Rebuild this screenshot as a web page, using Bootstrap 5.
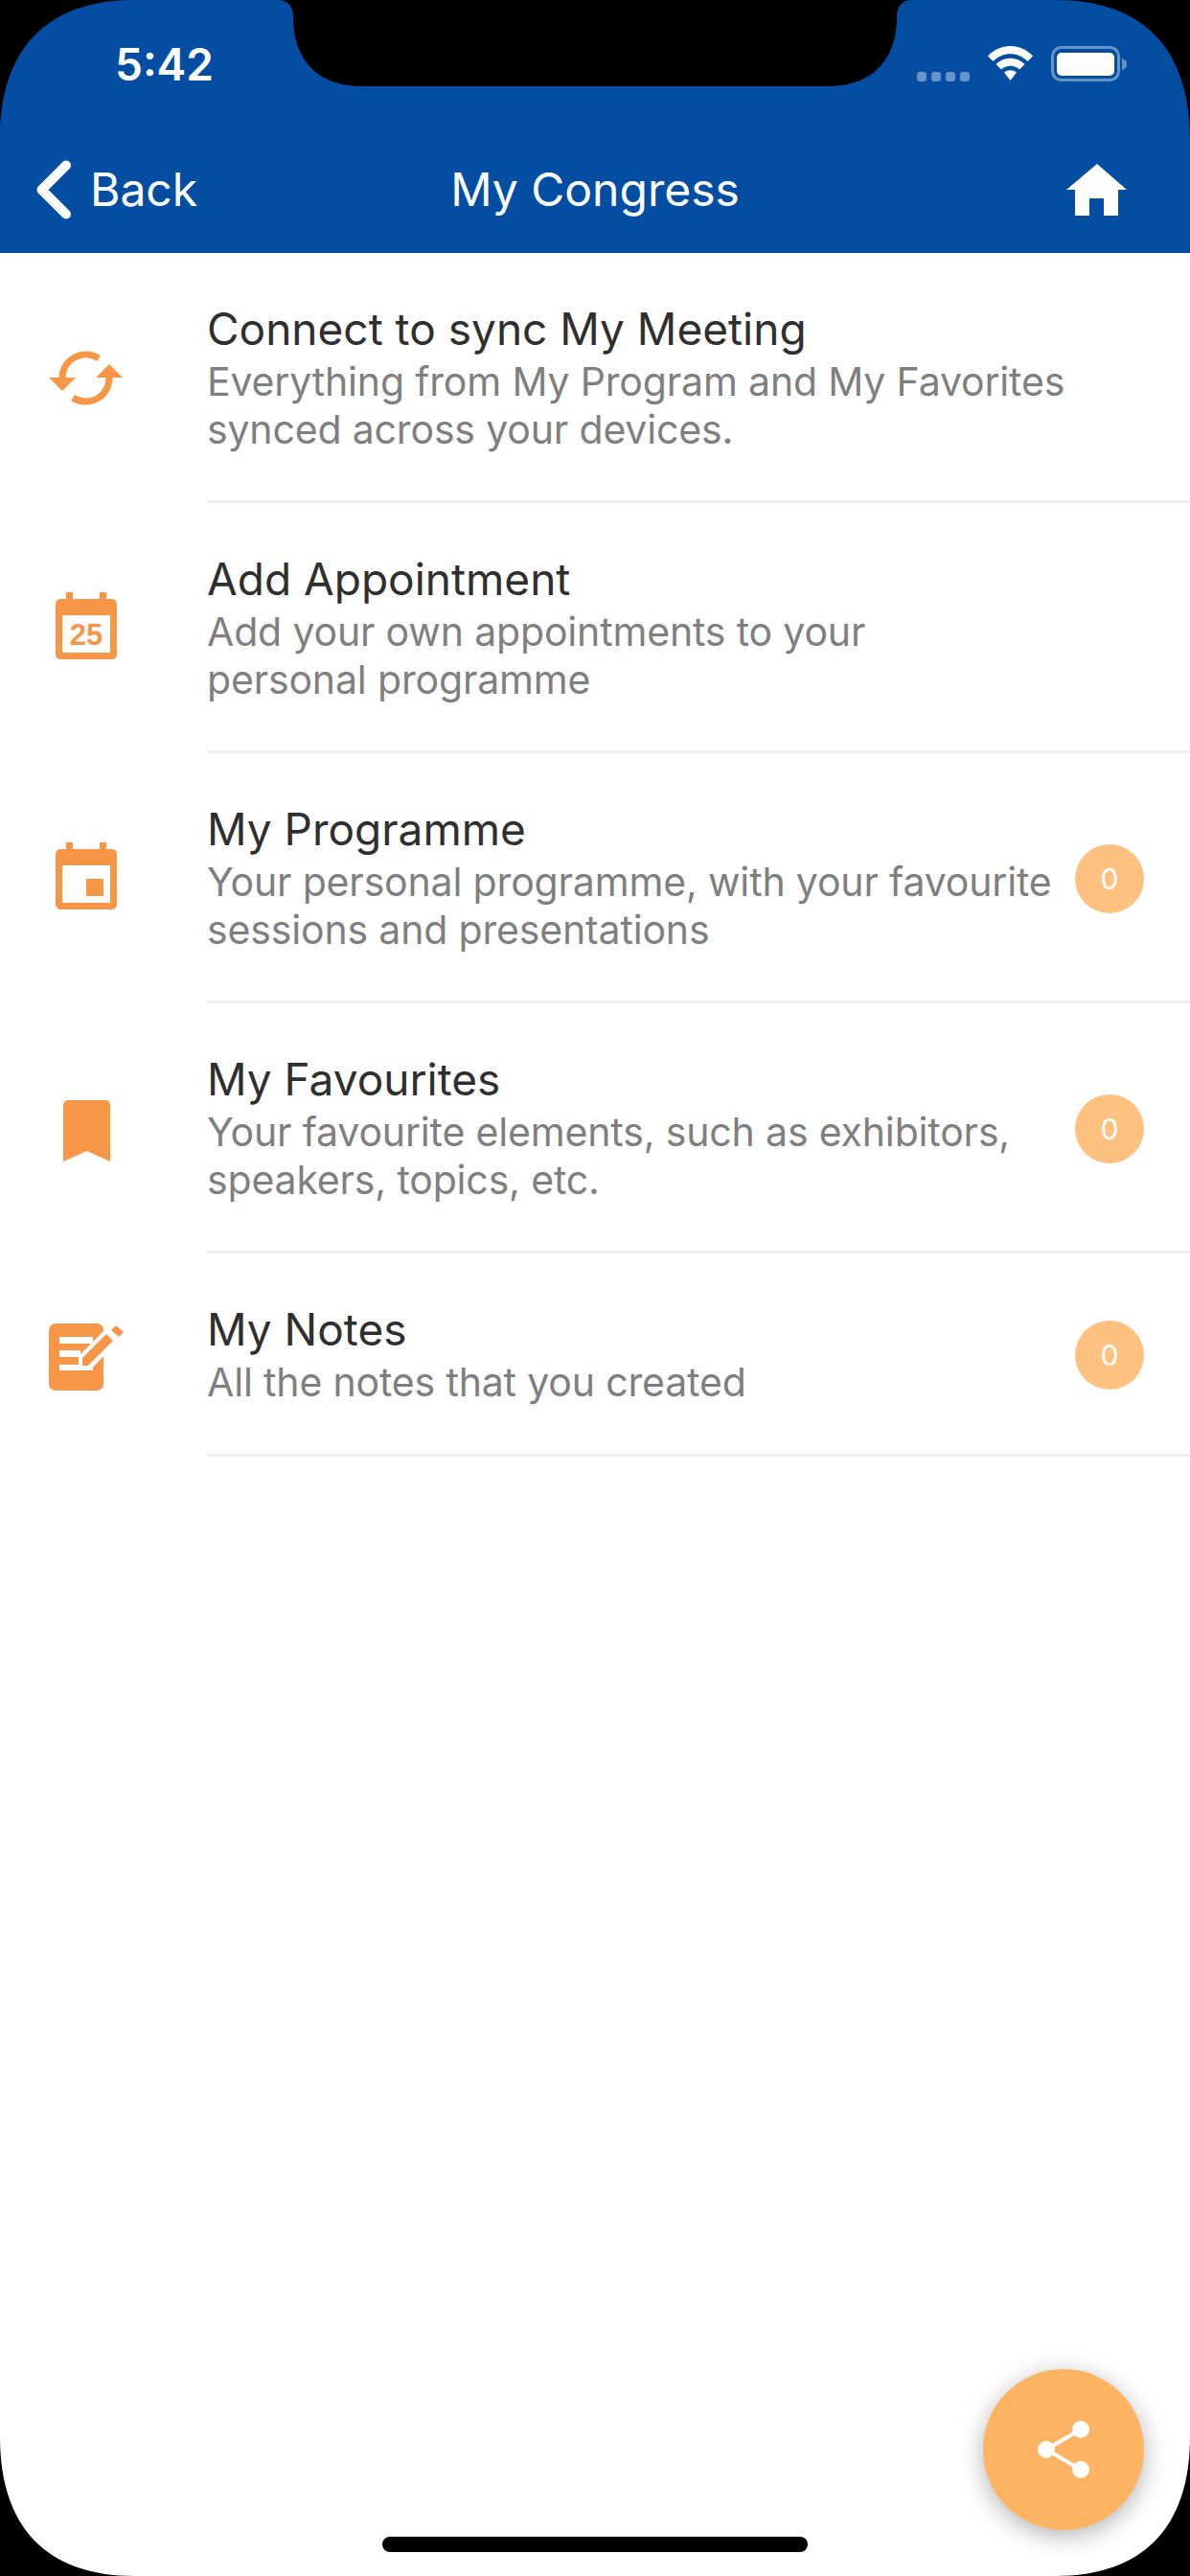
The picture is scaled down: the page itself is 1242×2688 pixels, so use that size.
<!DOCTYPE html>
<html lang="en">
<head>
  <meta charset="UTF-8">
  <title>My Congress</title>
  <meta name="viewport" content="width=device-width, initial-scale=1">
  <link href="https://cdn.jsdelivr.net/npm/bootstrap@5.3.3/dist/css/bootstrap.min.css" rel="stylesheet">
  <style>
    body { width: 1242px; height: 2688px; overflow: hidden; background: #fff; font-family: Inter, "Liberation Sans", sans-serif; }
    .phone-screen { width: 1242px; height: 2688px; }
    .app-header { height: 264px; background: #034ea2; color: #fff; }
    .status-row { height: 132px; padding: 42px 65px 0 120px; }
    .status-time { font-size: 46px; font-weight: 600; line-height: 50px; }
    .status-icons { margin-top: 6px; }
    .nav-row { height: 132px; padding: 0 66px 0 38px; }
    .nav-side { flex: 1 1 0; }
    .back-text { font-size: 48px; line-height: 60px; margin-left: 19px; }
    .nav-title { font-size: 48px; line-height: 60px; margin-left: 28px; }
    .entry-list { background: #fff; }
    .entry-icon { width: 216px; padding-right: 36px; flex: none; }
    .entry-icon svg { fill: #f79646; display: block; }
    .icon-up { margin-bottom: 6px; }
    .icon-down { margin-top: 4px; }
    .entry-body { border-bottom: 3px solid #efeff0; padding: 49px 48px 49px 0; }
    .entry-body-last { padding-bottom: 50px; }
    .entry-title { font-size: 46px; line-height: 60px; color: #2f2f2f; margin: 0; }
    .entry-desc { font-size: 41px; letter-spacing: -.16px; line-height: 50px; color: #7f7f7f; margin: 0; white-space: nowrap; }
    .count-dot { width: 72px; height: 72px; margin-top: 4px; background: #fec180; color: #fff; font-size: 30px; flex: none; }
    .share-fab { position: absolute; left: 1026px; top: 2472px; width: 168px; height: 168px; background: #fdb462; box-shadow: 0 6px 26px rgba(0, 0, 0, .3); }
    .home-bar { position: absolute; left: 399px; top: 2647px; width: 444px; height: 16px; background: #000; border-radius: 8px; }
    .device-mask { position: absolute; left: 0; top: 0; pointer-events: none; }
  </style>
</head>
<body class="position-relative">

<div class="phone-screen d-flex flex-column">

  <!-- Header -->
  <header class="app-header d-flex flex-column">
    <div class="status-row d-flex justify-content-between align-items-start">
      <span class="status-time">5:42</span>
      <svg class="status-icons" width="220" height="40" viewBox="0 0 220 40" fill="#fff">
        <g opacity=".4">
          <rect x="0" y="27" width="10" height="10" rx="3"/>
          <rect x="15" y="27" width="10" height="10" rx="3"/>
          <rect x="30" y="27" width="10" height="10" rx="3"/>
          <rect x="45" y="27" width="10" height="10" rx="3"/>
        </g>
        <path d="M74 10.500C87 -3.500 108 -3.500 121 10.500L115.500 16C105.500 5.500 89.500 5.500 79.500 16Z"/>
        <path d="M82.500 19C91 10.500 104 10.500 112.500 19L107 24.500C101.500 19.500 93.500 19.500 88 24.500Z"/>
        <path d="M91 27.500C95 24.500 100 24.500 104 27.500L97.500 36Z"/>
        <rect x="141.500" y="1.500" width="69" height="34" rx="9" fill="none" stroke="#fff" stroke-width="3" opacity=".4"/>
        <rect x="146" y="7" width="60" height="24" rx="5"/>
        <path d="M214 13C218 14.500 219 16 219 19C219 22 218 23.500 214 25Z" opacity=".4"/>
      </svg>
    </div>
    <nav class="nav-row d-flex align-items-center">
      <div class="nav-side d-flex align-items-center">
        <svg width="37" height="62" viewBox="0 0 37 62"><path d="M31 5.500L5.500 31L31 56.500" fill="none" stroke="#fff" stroke-width="10" stroke-linecap="round" stroke-linejoin="round"/></svg>
        <span class="back-text">Back</span>
      </div>
      <div class="nav-title">My Congress</div>
      <div class="nav-side d-flex justify-content-end">
        <svg width="63" height="54" viewBox="0 0 63 54" fill="#fff"><path d="M32 0L63 27H54V54H39V36H24V54H9V27H0Z"/></svg>
      </div>
    </nav>
  </header>

  <!-- Menu -->
  <ul class="entry-list list-group list-group-flush">
    <li class="list-group-item d-flex p-0 border-0">
      <div class="entry-icon d-flex align-items-center justify-content-center">
        <svg width="78" height="57" viewBox="0 0 78 57">
          <path d="M52 8A24.500 24.500 0 0 0 14 28" style="fill:none;stroke:#f79646;stroke-width:7"/>
          <path d="M25 49A24.500 24.500 0 0 0 63 28" style="fill:none;stroke:#f79646;stroke-width:7"/>
          <path d="M0 28H28L14 42Z"/>
          <path d="M49 28H77L63 14Z"/>
        </svg>
      </div>
      <div class="entry-body flex-grow-1">
        <p class="entry-title">Connect to sync My Meeting</p>
        <p class="entry-desc">Everything from My Program and My Favorites<br>synced across your devices.</p>
      </div>
    </li>
    <li class="list-group-item d-flex p-0 border-0">
      <div class="entry-icon d-flex align-items-center justify-content-center">
        <svg class="icon-up" width="64" height="70" viewBox="0 0 64 70">
          <path fill-rule="evenodd" d="M11 0H18V7H46V0H53V7H58C62 7 64 9 64 13V64C64 68 62 70 58 70H6C2 70 0 68 0 64V13C0 9 2 7 6 7H11ZM7 24V63H57V24Z"/>
          <text x="32" y="55" text-anchor="middle" font-family="Liberation Sans, sans-serif" font-weight="700" font-size="31">25</text>
        </svg>
      </div>
      <div class="entry-body flex-grow-1">
        <p class="entry-title">Add Appointment</p>
        <p class="entry-desc">Add your own appointments to your<br>personal programme</p>
      </div>
    </li>
    <li class="list-group-item d-flex p-0 border-0">
      <div class="entry-icon d-flex align-items-center justify-content-center">
        <svg class="icon-up" width="64" height="70" viewBox="0 0 64 70">
          <path fill-rule="evenodd" d="M11 0H18V7H46V0H53V7H58C62 7 64 9 64 13V64C64 68 62 70 58 70H6C2 70 0 68 0 64V13C0 9 2 7 6 7H11ZM7 24V63H57V24Z"/>
          <rect x="32" y="38" width="18" height="18"/>
        </svg>
      </div>
      <div class="entry-body flex-grow-1 d-flex align-items-center justify-content-between">
        <div>
          <p class="entry-title">My Programme</p>
          <p class="entry-desc">Your personal programme, with your favourite<br>sessions and presentations</p>
        </div>
        <span class="count-dot rounded-circle d-flex align-items-center justify-content-center">0</span>
      </div>
    </li>
    <li class="list-group-item d-flex p-0 border-0">
      <div class="entry-icon d-flex align-items-center justify-content-center">
        <svg class="icon-down" width="49" height="64" viewBox="0 0 49 64">
          <path d="M6 0H43C47 0 49 2 49 6V64L24.500 53L0 64V6C0 2 2 0 6 0Z"/>
        </svg>
      </div>
      <div class="entry-body flex-grow-1 d-flex align-items-center justify-content-between">
        <div>
          <p class="entry-title">My Favourites</p>
          <p class="entry-desc">Your favourite elements, such as exhibitors,<br>speakers, topics, etc.</p>
        </div>
        <span class="count-dot rounded-circle d-flex align-items-center justify-content-center">0</span>
      </div>
    </li>
    <li class="list-group-item d-flex p-0 border-0">
      <div class="entry-icon d-flex align-items-center justify-content-center">
        <svg class="icon-down" width="78" height="70" viewBox="0 0 78 70">
          <rect x="0" y="0" width="57" height="70" rx="7"/>
          <g style="fill:#fff">
            <rect x="11" y="14" width="35" height="7"/>
            <rect x="11" y="28" width="22" height="7"/>
            <rect x="11" y="43" width="35" height="6"/>
            <path d="M31 34L60 5L72 18L43 49H31Z"/>
          </g>
          <path d="M35 36L60 11L67 18L41 44H35Z"/>
          <path d="M70 2L78 9L73 14L65 7Z"/>
        </svg>
      </div>
      <div class="entry-body entry-body-last flex-grow-1 d-flex align-items-center justify-content-between">
        <div>
          <p class="entry-title">My Notes</p>
          <p class="entry-desc">All the notes that you created</p>
        </div>
        <span class="count-dot rounded-circle d-flex align-items-center justify-content-center">0</span>
      </div>
    </li>
  </ul>
</div>

<!-- Floating share button -->
<button type="button" class="share-fab btn rounded-circle border-0 p-0 d-flex align-items-center justify-content-center" aria-label="Share">
  <svg width="60" height="60" viewBox="0 0 60 60" fill="#fff">
    <path d="M12 30L48 9M12 30L48 51" stroke="#fff" stroke-width="4"/>
    <circle cx="12" cy="30" r="9"/>
    <circle cx="48" cy="9" r="9"/>
    <circle cx="48" cy="51" r="9"/>
  </svg>
</button>

<div class="home-bar"></div>

<!-- Device corners and notch lie over the app -->
<svg class="device-mask" width="1242" height="2688" viewBox="0 0 1242 2688">
  <path fill="#000" fill-rule="evenodd" d="M0 0H1242V2688H0Z M0 145C0 50 50 0 140 0H290C300 0 306 6 306 18C306 55 325 90 378 90H864C917 90 936 55 936 18C936 6 942 0 952 0H1102C1192 0 1242 50 1242 145V2543C1242 2638 1192 2688 1102 2688H140C50 2688 0 2638 0 2543Z"/>
</svg>

<script src="https://cdn.jsdelivr.net/npm/bootstrap@5.3.3/dist/js/bootstrap.bundle.min.js"></script>
</body>
</html>
